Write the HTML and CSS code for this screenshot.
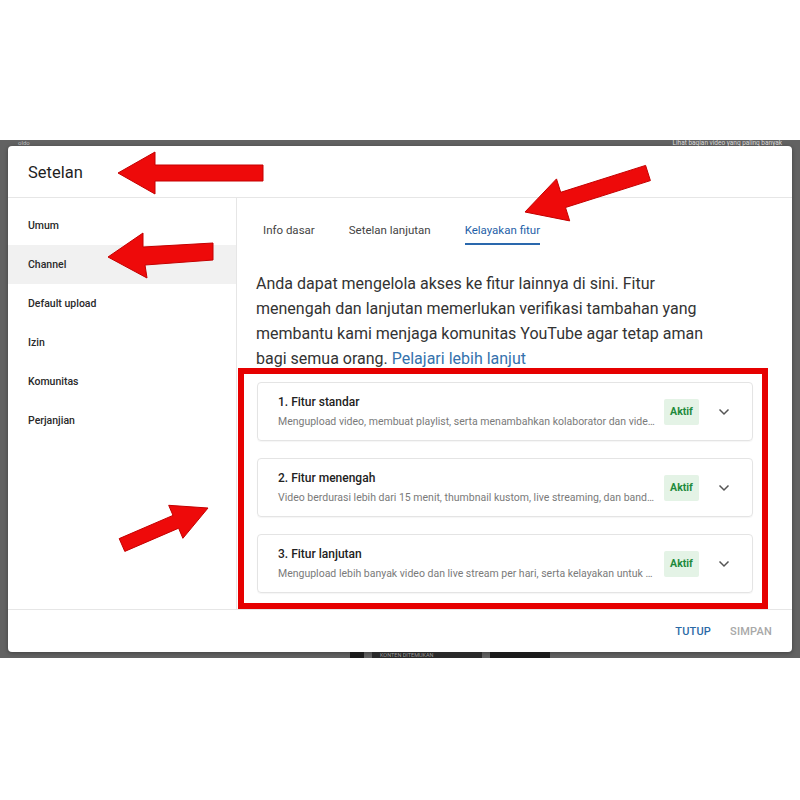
FILE: index.html
```html
<!DOCTYPE html>
<html lang="id">
<head>
<meta charset="utf-8">
<title>Setelan</title>
<link rel="stylesheet" href="styles.css">
</head>
<body>
<div class="page">
  <div class="backdrop">
    <div class="bg-strip top">
      <span class="bg-left">oldo</span>
      <span class="bg-right">Lihat bagian video yang paling banyak</span>
    </div>
    <div class="dialog">
      <div class="dlg-header">Setelan</div>
      <div class="dlg-body">
        <nav class="sidebar">
          <div class="nav-item">Umum</div>
          <div class="nav-item active">Channel</div>
          <div class="nav-item">Default upload</div>
          <div class="nav-item">Izin</div>
          <div class="nav-item">Komunitas</div>
          <div class="nav-item">Perjanjian</div>
        </nav>
        <main class="content">
          <div class="tabs">
            <div class="tab">Info dasar</div>
            <div class="tab">Setelan lanjutan</div>
            <div class="tab active">Kelayakan fitur</div>
          </div>
          <p class="intro">Anda dapat mengelola akses ke fitur lainnya di sini. Fitur menengah dan lanjutan memerlukan verifikasi tambahan yang membantu kami menjaga komunitas YouTube agar tetap aman bagi semua orang. <a class="link">Pelajari lebih lanjut</a></p>
          <div class="cards">
            <div class="card">
              <div class="card-text">
                <div class="card-title">1. Fitur standar</div>
                <div class="card-desc">Mengupload video, membuat playlist, serta menambahkan kolaborator dan vide…</div>
              </div>
              <span class="badge">Aktif</span>
              <svg class="chev" viewBox="0 0 12 8" width="12" height="8"><path d="M1.5 1.5 L6 6 L10.5 1.5" fill="none" stroke="#555" stroke-width="1.5"/></svg>
            </div>
            <div class="card">
              <div class="card-text">
                <div class="card-title">2. Fitur menengah</div>
                <div class="card-desc">Video berdurasi lebih dari 15 menit, thumbnail kustom, live streaming, dan band…</div>
              </div>
              <span class="badge">Aktif</span>
              <svg class="chev" viewBox="0 0 12 8" width="12" height="8"><path d="M1.5 1.5 L6 6 L10.5 1.5" fill="none" stroke="#555" stroke-width="1.5"/></svg>
            </div>
            <div class="card">
              <div class="card-text">
                <div class="card-title">3. Fitur lanjutan</div>
                <div class="card-desc">Mengupload lebih banyak video dan live stream per hari, serta kelayakan untuk …</div>
              </div>
              <span class="badge">Aktif</span>
              <svg class="chev" viewBox="0 0 12 8" width="12" height="8"><path d="M1.5 1.5 L6 6 L10.5 1.5" fill="none" stroke="#555" stroke-width="1.5"/></svg>
            </div>
          </div>
        </main>
      </div>
      <div class="dlg-footer">
        <span class="btn primary">TUTUP</span>
        <span class="btn disabled">SIMPAN</span>
      </div>
    </div>
    <div class="bg-strip bottom">
      <span class="blk small"></span>
      <span class="blk-text">KONTEN DITEMUKAN</span>
      <span class="blk"></span>
    </div>
  </div>
</div>
<svg class="annot" viewBox="0 0 800 800" width="800" height="800">
  <g fill="#ee0a0a" stroke="#c40000" stroke-width="1" stroke-linejoin="round">
    <polygon points="118,173 155,152 155,165 263,165 263,181 155,181 155,194"/>
    <polygon points="108,257 143,233 143,247 213,243 213,260 145,265 147,278"/>
    <polygon points="525,212 556.5,178.9 560.7,192.3 645.6,165.4 650.4,180.6 565.5,207.5 569.7,220.9"/>
    <polygon points="208,508 168.7,505.3 173,515.4 119.2,538.6 124.8,551.4 178.6,528.2 182.9,538.3"/>
  </g>
  <rect x="241" y="371" width="524" height="235" fill="none" stroke="#e60000" stroke-width="6"/>
</svg>
</body>
</html>
```
FILE: styles.css
```css
* { box-sizing: border-box; }
html, body { margin: 0; padding: 0; background: #fff; }
body {
  font-family: Roboto, "Liberation Sans", Arial, sans-serif;
  color: #222;
  width: 800px;
  height: 800px;
  position: relative;
  overflow: hidden;
}
.page { padding-top: 140px; }
.backdrop {
  background: #626262;
  height: 518px;
  padding: 0 8px;
  display: flex;
  flex-direction: column;
}
.bg-strip {
  height: 6px;
  overflow: hidden;
  display: flex;
  position: relative;
}
.bg-strip.top { justify-content: space-between; align-items: center; }
.bg-left, .bg-right {
  font-size: 6px;
  line-height: 6px;
  color: #bcbcbc;
}
.bg-left { margin-left: 10px; }
.bg-right { margin-right: 10px; color: #d8d8d8; font-size: 6.5px; }
.bg-strip.bottom { align-items: stretch; padding-left: 342px; gap: 8px; }
.blk { width: 60px; background: #1c1c1c; }
.blk.small { width: 14px; }
.blk-text {
  font-size: 5.5px;
  line-height: 6px;
  color: #999;
  background: #2a2a2a;
  width: 110px;
  padding-left: 8px;
}
.dialog {
  background: #fff;
  border-radius: 4px;
  height: 506px;
  display: flex;
  flex-direction: column;
  box-shadow: 0 1px 4px rgba(0,0,0,0.35);
}
.dlg-header {
  height: 52px;
  border-bottom: 1px solid #e6e6e6;
  padding-left: 20px;
  display: flex;
  align-items: center;
  font-size: 16.5px;
  color: #1f1f1f;
  padding-top: 2px;
}
.dlg-body {
  display: flex;
  height: 412px;
  border-bottom: 1px solid #e6e6e6;
}
.sidebar {
  width: 229px;
  flex: none;
  border-right: 1px solid #e6e6e6;
  padding-top: 8px;
}
.nav-item {
  height: 39px;
  display: flex;
  align-items: center;
  padding-left: 20px;
  font-size: 10.5px;
  font-weight: 500;
  color: #2a2a2a;
}
.nav-item.active { background: #f1f1f1; }
.content {
  flex: 1;
  padding-left: 19px;
  padding-right: 40px;
}
.tabs {
  display: flex;
  gap: 34px;
  margin-top: 19px;
  margin-left: 7px;
  height: 28px;
}
.tab {
  font-size: 11.5px;
  color: #444;
  display: flex;
  align-items: center;
  height: 28px;
  border-bottom: 2px solid transparent;
}
.tab.active { color: #1f5fa8; border-bottom-color: #2a68ad; }
.intro {
  margin: 26px 0 0 0;
  font-size: 16px;
  line-height: 25px;
  color: #333;
  width: 468px;
}
.link { color: #3572ad; }
.cards {
  margin-top: 11px;
  display: flex;
  flex-direction: column;
  gap: 17px;
  width: 496px;
  margin-left: 1px;
}
.card {
  height: 59px;
  border: 1px solid #e4e4e4;
  border-radius: 4px;
  display: flex;
  align-items: center;
  padding: 0 22px 0 20px;
  box-shadow: 0 1px 1px rgba(0,0,0,0.04);
}
.card-text {
  width: 381px;
  min-width: 0;
}
.card-title {
  font-size: 12px;
  font-weight: 500;
  color: #222;
  line-height: 15px;
}
.card-desc {
  margin-top: 5px;
  font-size: 10.5px;
  line-height: 13px;
  color: #7a7a7a;
  white-space: nowrap;
}
.badge {
  margin-left: 5px;
  width: 35px;
  height: 26px;
  background: #e4f3e6;
  color: #1e8a3c;
  font-size: 10.5px;
  font-weight: 700;
  display: flex;
  align-items: center;
  justify-content: center;
  border-radius: 2px;
}
.chev { margin-left: auto; }
.dlg-footer {
  flex: 1;
  display: flex;
  justify-content: flex-end;
  align-items: center;
  gap: 19px;
  padding-right: 20px;
}
.btn {
  font-size: 11px;
  font-weight: 500;
  letter-spacing: 0.2px;
}
.btn.primary { color: #2b6aa6; }
.btn.disabled { color: #a8a8a8; }
.annot {
  position: absolute;
  left: 0;
  top: 0;
  pointer-events: none;
}
```
